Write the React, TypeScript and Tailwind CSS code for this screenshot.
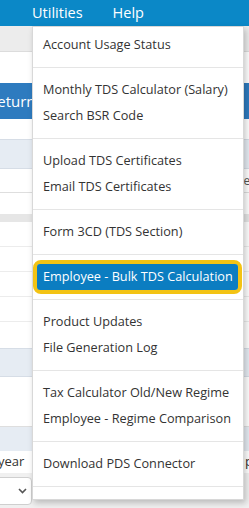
import React from "react";

const font = { fontFamily: '"Open Sans", "Noto Sans", sans-serif' };

type Entry = { t: "item"; label: string; hl?: boolean } | { t: "sep" };

const entries: Entry[] = [
  { t: "item", label: "Account Usage Status" },
  { t: "sep" },
  { t: "item", label: "Monthly TDS Calculator (Salary)" },
  { t: "item", label: "Search BSR Code" },
  { t: "sep" },
  { t: "item", label: "Upload TDS Certificates" },
  { t: "item", label: "Email TDS Certificates" },
  { t: "sep" },
  { t: "item", label: "Form 3CD (TDS Section)" },
  { t: "sep" },
  { t: "item", label: "Employee - Bulk TDS Calculation", hl: true },
  { t: "sep" },
  { t: "item", label: "Product Updates" },
  { t: "item", label: "File Generation Log" },
  { t: "sep" },
  { t: "item", label: "Tax Calculator Old/New Regime" },
  { t: "item", label: "Employee - Regime Comparison" },
  { t: "sep" },
  { t: "item", label: "Download PDS Connector" },
  { t: "sep" },
];

export default function App() {
  return (
    <div className="relative w-[249px] h-[508px] overflow-hidden bg-white" style={font}>
      {/* background page */}
      <div className="flex flex-col w-full h-full">
        <div className="h-[26px] bg-[#0b88c7] flex items-center text-white text-[14.5px]">
          <span className="ml-[32px]">Utilities</span>
          <span className="ml-[30px]">Help</span>
        </div>
        <div className="h-[26px] bg-[#ececec] border-b border-[#dcdcdc]" />
        <div className="h-[31px] bg-white" />
        <div className="h-[36px] flex justify-between">
          <div className="w-[60px] bg-[#2e7bbf] text-white text-[15px] flex items-center -ml-[12px]">Return</div>
          <div className="w-[20px] bg-[#2e7bbf] text-white text-[15px] flex items-center pl-[1px]">a</div>
        </div>
        <div className="h-[20px] bg-white" />
        <div className="h-[30px] bg-[#e6ecf3] border-y border-[#d6dde6]" />
        <div className="h-[23px] bg-white flex justify-end items-center text-[12px] text-[#555]">
          <span className="-mr-[8px]">ea</span>
        </div>
        <div className="h-[22px] bg-white border-t border-[#dedede]" />
        <div className="h-[8px] bg-[#e6e6e6]" />
        <div className="h-[25px] bg-white border-b border-[#ececec]" />
        <div className="h-[25px] bg-white border-b border-[#ececec]" />
        <div className="h-[25px] bg-white border-b border-[#ececec]" />
        <div className="h-[25px] bg-white border-b border-[#ececec]" />
        <div className="h-[26px] bg-white" />
        <div className="h-[29px] bg-[#e6ecf3] border-y border-[#d6dde6]" />
        <div className="h-[50px] bg-white border-b border-[#dedede]" />
        <div className="h-[24px] bg-[#e6ecf3]" />
        <div className="h-[22px] bg-white flex justify-between items-center text-[13px] text-[#333]">
          <span className="-ml-[2px]">year</span>
          <span className="-mr-[4px]">p</span>
        </div>
        <div className="flex-1 bg-[#f0f0f0] relative">
          <div className="absolute left-[-6px] top-[4px] w-[38px] h-[28px] bg-white border border-[#cfcfcf] rounded-[4px] flex items-center justify-end pr-[4px]">
            <svg width="9" height="6" viewBox="0 0 9 6"><path d="M1 1l3.5 3.5L8 1" fill="none" stroke="#555" strokeWidth="1.6" /></svg>
          </div>
        </div>
      </div>

      {/* dropdown menu */}
      <div className="absolute left-[32px] top-[26px] w-[212px] h-[474px] bg-white border border-[#d8d8d8] shadow-[2px_3px_6px_rgba(0,0,0,0.22)] pt-[5px]">
        {entries.map((e, i) =>
          e.t === "sep" ? (
            <div key={i} className="h-[19px] flex items-center">
              <div className="w-full h-px bg-[#e5e5e5]" />
            </div>
          ) : e.hl ? (
            <div key={i} className="relative h-[26px]">
              <div className="absolute left-[0px] top-[-4px] w-[209px] h-[34px] rounded-[8px] border-[4px] border-[#f3c314]" />
              <div className="absolute left-[4px] top-0 w-[201px] h-[26px] bg-[#0b7dc1] rounded-[3px] flex items-center pl-[6px] text-white text-[12.7px] whitespace-nowrap">
                {e.label}
              </div>
            </div>
          ) : (
            <div key={i} className="h-[26px] flex items-center pl-[10px] text-[12.7px] text-[#333] whitespace-nowrap">
              {e.label}
            </div>
          )
        )}
      </div>
    </div>
  );
}
